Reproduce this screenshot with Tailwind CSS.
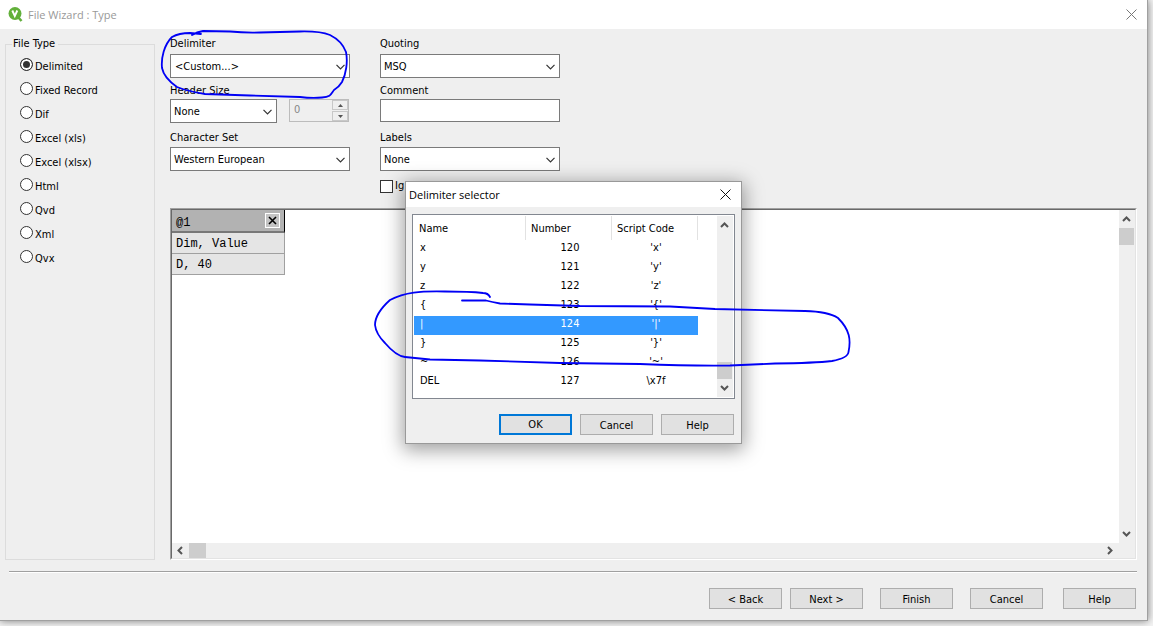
<!DOCTYPE html>
<html lang="en">
<head>
<meta charset="utf-8">
<title>File Wizard : Type</title>
<script src="https://cdn.jsdelivr.net/npm/@tailwindcss/browser@4"></script>
</head>
<body class="h-screen overflow-hidden bg-[#f4f4f4] pr-[5px] pb-[5px] font-['DejaVu_Sans_Condensed','DejaVu_Sans',sans-serif] text-[11px] leading-4 text-black">
<div class="relative flex h-full flex-col border-r border-b border-[#a0a0a0] bg-[#efefef] shadow-[0_0_8px_rgba(0,0,0,0.5)]">
  <header class="flex h-[29px] shrink-0 items-center bg-white pr-2.5 pl-[7px] text-[#999]">
    <svg class="mr-[5px] h-4 w-4" viewBox="0 0 16 16" aria-hidden="true"><path d="M11 10l3.500 4" stroke="#62ae3c" stroke-width="2.5"/><circle cx="8" cy="6.500" r="6.500" fill="#62b03a"/><path d="M5.300 3.500l2.500 5.500 2.500-5.500" fill="none" stroke="#fff" stroke-width="1.900"/></svg>
    <h1 class="grow font-['Open_Sans','Noto_Sans',sans-serif]">File Wizard : Type</h1>
    <button type="button" aria-label="Close window"><svg class="h-[11px] w-[11px]" viewBox="0 0 11 11"><path d="M.5.5l10 10M10.500.500l-10 10" stroke="#777" fill="none"/></svg></button>
  </header>

  <main class="flex min-h-0 grow gap-[15px] pt-[7px] pr-2.5 pl-[5px]">
    <fieldset class="flex w-[150px] shrink-0 flex-col border border-[#dcdcdc] pl-3.5">
      <legend class="-ml-2 pr-[3px] pl-px">File Type</legend>
      <div class="flex flex-col gap-1.5 pt-1.5 leading-[18px]">
        <label class="flex items-start gap-0.5"><input type="radio" name="ft" checked class="h-[13px] w-[13px] appearance-none rounded-full border border-[#333] bg-white checked:bg-[#333] checked:shadow-[inset_0_0_0_2px_#fff]">Delimited</label>
        <label class="flex items-start gap-0.5"><input type="radio" name="ft" class="h-[13px] w-[13px] appearance-none rounded-full border border-[#333] bg-white">Fixed Record</label>
        <label class="flex items-start gap-0.5"><input type="radio" name="ft" class="h-[13px] w-[13px] appearance-none rounded-full border border-[#333] bg-white">Dif</label>
        <label class="flex items-start gap-0.5"><input type="radio" name="ft" class="h-[13px] w-[13px] appearance-none rounded-full border border-[#333] bg-white">Excel (xls)</label>
        <label class="flex items-start gap-0.5"><input type="radio" name="ft" class="h-[13px] w-[13px] appearance-none rounded-full border border-[#333] bg-white">Excel (xlsx)</label>
        <label class="flex items-start gap-0.5"><input type="radio" name="ft" class="h-[13px] w-[13px] appearance-none rounded-full border border-[#333] bg-white">Html</label>
        <label class="flex items-start gap-0.5"><input type="radio" name="ft" class="h-[13px] w-[13px] appearance-none rounded-full border border-[#333] bg-white">Qvd</label>
        <label class="flex items-start gap-0.5"><input type="radio" name="ft" class="h-[13px] w-[13px] appearance-none rounded-full border border-[#333] bg-white">Xml</label>
        <label class="flex items-start gap-0.5"><input type="radio" name="ft" class="h-[13px] w-[13px] appearance-none rounded-full border border-[#333] bg-white">Qvx</label>
      </div>
    </fieldset>

    <div class="flex min-w-0 grow flex-col">
      <div class="flex gap-[30px] pb-[14px]">
        <div class="flex w-[180px] flex-col">
          <label for="delim">Delimiter</label>
          <div class="relative mt-0.5">
            <select id="delim" class="block h-6 w-full appearance-none border border-[#7a7a7a] bg-white pt-px pl-1"><option>&lt;Custom...&gt;</option></select>
            <svg class="pointer-events-none absolute top-[10px] right-[5px] h-[6px] w-[9px]" viewBox="0 0 9 6"><path d="M.5.8l4 4 4-4" fill="none" stroke="#333" stroke-width="1.200"/></svg>
          </div>
          <label for="hsize" class="mt-[5px]">Header Size</label>
          <div class="flex gap-3">
            <div class="relative w-[107px]">
              <select id="hsize" class="block h-6 w-full appearance-none border border-[#7a7a7a] bg-white pt-px pl-[3px]"><option>None</option></select>
              <svg class="pointer-events-none absolute top-[10px] right-[5px] h-[6px] w-[9px]" viewBox="0 0 9 6"><path d="M.5.8l4 4 4-4" fill="none" stroke="#333" stroke-width="1.200"/></svg>
            </div>
            <div class="flex h-[23px] w-[60px] border border-[#bcbcbc]">
              <input type="text" aria-label="Header lines" value="0" disabled class="w-0 grow pb-0.5 pl-1 text-[#888]">
              <div class="flex w-4 flex-col gap-px">
                <button type="button" disabled aria-label="Increase" class="flex grow items-center justify-center border border-[#c8c8c8]"><svg class="h-[3px] w-[5px]" viewBox="0 0 5 3"><path d="M0 3L2.500 0 5 3z" fill="#555"/></svg></button>
                <button type="button" disabled aria-label="Decrease" class="flex grow items-center justify-center border border-[#c8c8c8]"><svg class="h-[3px] w-[5px]" viewBox="0 0 5 3"><path d="M0 0L2.500 3 5 0z" fill="#555"/></svg></button>
              </div>
            </div>
          </div>
          <label for="charset" class="mt-[7px]">Character Set</label>
          <div class="relative mt-px">
            <select id="charset" class="block h-6 w-full appearance-none border border-[#7a7a7a] bg-white pt-px pl-[3px]"><option>Western European</option></select>
            <svg class="pointer-events-none absolute top-[10px] right-[5px] h-[6px] w-[9px]" viewBox="0 0 9 6"><path d="M.5.8l4 4 4-4" fill="none" stroke="#333" stroke-width="1.200"/></svg>
          </div>
        </div>
        <div class="flex w-[180px] flex-col">
          <label for="quoting">Quoting</label>
          <div class="relative mt-0.5">
            <select id="quoting" class="block h-6 w-full appearance-none border border-[#7a7a7a] bg-white pt-px pl-[3px]"><option>MSQ</option></select>
            <svg class="pointer-events-none absolute top-[10px] right-[5px] h-[6px] w-[9px]" viewBox="0 0 9 6"><path d="M.5.8l4 4 4-4" fill="none" stroke="#333" stroke-width="1.200"/></svg>
          </div>
          <label for="comment" class="mt-[5px]">Comment</label>
          <input id="comment" type="text" class="h-[23px] border border-[#7a7a7a] bg-white px-[3px]">
          <label for="labels" class="mt-2">Labels</label>
          <div class="relative mt-px">
            <select id="labels" class="block h-6 w-full appearance-none border border-[#7a7a7a] bg-white pt-px pl-[3px]"><option>None</option></select>
            <svg class="pointer-events-none absolute top-[10px] right-[5px] h-[6px] w-[9px]" viewBox="0 0 9 6"><path d="M.5.8l4 4 4-4" fill="none" stroke="#333" stroke-width="1.200"/></svg>
          </div>
          <label class="mt-[7px] flex items-center gap-0.5"><input type="checkbox" class="h-[13px] w-[13px] appearance-none border border-[#333] bg-white">Ig</label>
        </div>
      </div>

      <!-- Preview grid with its scrollbars -->
      <section class="min-h-0 grow border border-t-[#a0a0a0] border-r-white border-b-white border-l-[#a0a0a0]">
        <div class="flex h-full flex-col border border-t-[#696969] border-r-[#e3e3e3] border-b-[#e3e3e3] border-l-[#696969]">
          <div class="flex min-h-0 grow">
            <div class="grow bg-white">
              <table class="w-[113px] border-separate border-spacing-0 font-['Liberation_Mono',monospace] text-[12px]">
                <thead><tr><th class="h-[23px] border-r border-b-2 border-r-black border-b-[#787878] bg-[#b2b2b2] p-0 font-normal"><div class="flex items-center justify-between pr-1 pl-1"><span class="pt-1">@1</span><button type="button" aria-label="Remove column" class="flex h-[15px] w-[15px] items-center justify-center border border-white bg-[#c4c4c4]"><svg class="h-[9px] w-[9px]" viewBox="0 0 9 9"><path d="M1 1l7 7M8 1L1 8" stroke="#000" stroke-width="1.6"/></svg></button></div></th></tr></thead>
                <tbody>
                  <tr><td class="h-[21px] border-r border-b border-[#a0a0a0] bg-[#e5e5e5] p-0 pt-0.5 pl-1">Dim, Value</td></tr>
                  <tr><td class="h-[21px] border-r border-b border-[#a0a0a0] bg-[#e5e5e5] p-0 pt-0.5 pl-1">D, 40</td></tr>
                </tbody>
              </table>
            </div>
            <div class="flex w-4 flex-col items-center justify-between py-1.5 pr-px">
              <div class="flex w-full flex-col items-center gap-1.5"><svg class="h-[6px] w-[9px]" viewBox="0 0 9 6"><path d="M1 5l3.500-3.500L8 5" fill="none" stroke="#555" stroke-width="2"/></svg><div class="h-[17px] w-full bg-[#cdcdcd]"></div></div>
              <svg class="h-[6px] w-[9px]" viewBox="0 0 9 6"><path d="M1 1l3.500 3.500L8 1" fill="none" stroke="#555" stroke-width="2"/></svg>
            </div>
          </div>
          <div class="flex h-[15px] shrink-0 items-center justify-between pr-[22px] pl-[5px]">
            <div class="flex h-full items-center gap-1.5"><svg class="h-[9px] w-[6px]" viewBox="0 0 6 9"><path d="M5 1L1.500 4.500 5 8" fill="none" stroke="#555" stroke-width="2"/></svg><div class="h-full w-[17px] bg-[#cdcdcd]"></div></div>
            <svg class="h-[9px] w-[6px]" viewBox="0 0 6 9"><path d="M1 1l3.500 3.500L1 8" fill="none" stroke="#555" stroke-width="2"/></svg>
          </div>
        </div>
      </section>
    </div>
  </main>

  <footer class="mt-[11px] mr-2.5 ml-[9px] flex h-[49px] shrink-0 justify-end border-t border-[#a0a0a0] pt-4 pr-px shadow-[inset_0_1px_0_#fff]">
    <button type="button" class="h-[21px] w-[73px] border border-[#adadad] bg-[#e1e1e1] pt-0.5">&lt; Back</button>
    <button type="button" class="ml-2 h-[21px] w-[73px] border border-[#adadad] bg-[#e1e1e1] pt-0.5">Next &gt;</button>
    <button type="button" class="ml-[17px] h-[21px] w-[73px] border border-[#adadad] bg-[#e1e1e1] pt-0.5">Finish</button>
    <button type="button" class="ml-[17px] h-[21px] w-[73px] border border-[#adadad] bg-[#e1e1e1] pt-0.5">Cancel</button>
    <button type="button" class="ml-5 h-[21px] w-[73px] border border-[#adadad] bg-[#e1e1e1] pt-0.5">Help</button>
  </footer>
</div>

<div role="dialog" aria-labelledby="dlg-title" class="absolute top-[181px] left-[405px] w-[337px] border border-[#999] bg-[#efefef] shadow-[0_4px_18px_2px_rgba(0,0,0,0.38)]">
  <div class="flex h-[25px] items-center bg-white pr-2.5 pl-[3px]">
    <h2 id="dlg-title" class="grow font-['Open_Sans','Noto_Sans',sans-serif]">Delimiter selector</h2>
    <button type="button" aria-label="Close"><svg class="h-[11px] w-[11px]" viewBox="0 0 11 11"><path d="M.5.5l10 10M10.500.500l-10 10" stroke="#111" fill="none"/></svg></button>
  </div>
  <div class="mx-1.5 mt-[7px] flex h-[185px] justify-between border border-[#828790] bg-white p-px">
    <table class="w-[284px] table-fixed border-separate border-spacing-0 self-start text-center">
      <thead><tr class="h-6 text-left">
        <th class="w-[112px] border-r border-[#e2e2e2] p-0 pt-0.5 pl-[5px] font-normal">Name</th>
        <th class="w-[86px] border-r border-[#e2e2e2] p-0 pt-0.5 pl-[5px] font-normal">Number</th>
        <th class="w-[86px] border-r border-[#e2e2e2] p-0 pt-0.5 pl-[5px] font-normal">Script Code</th>
      </tr></thead>
      <tbody>
        <tr class="h-[19px] align-top"><td class="p-0 pl-1.5 text-left">x</td><td class="p-0 pl-0.5">120</td><td class="p-0 pl-0.5">'x'</td></tr>
        <tr class="h-[19px] align-top"><td class="p-0 pl-1.5 text-left">y</td><td class="p-0 pl-0.5">121</td><td class="p-0 pl-0.5">'y'</td></tr>
        <tr class="h-[19px] align-top"><td class="p-0 pl-1.5 text-left">z</td><td class="p-0 pl-0.5">122</td><td class="p-0 pl-0.5">'z'</td></tr>
        <tr class="h-[19px] align-top"><td class="p-0 pl-1.5 text-left">{</td><td class="p-0 pl-0.5">123</td><td class="p-0 pl-0.5">'{'</td></tr>
        <tr class="h-[19px] bg-[#3399ff] align-top text-white"><td class="p-0 pl-1.5 text-left">|</td><td class="p-0 pl-0.5">124</td><td class="p-0 pl-0.5">'|'</td></tr>
        <tr class="h-[19px] align-top"><td class="p-0 pl-1.5 text-left">}</td><td class="p-0 pl-0.5">125</td><td class="p-0 pl-0.5">'}'</td></tr>
        <tr class="h-[19px] align-top"><td class="p-0 pl-1.5 text-left">~</td><td class="p-0 pl-0.5">126</td><td class="p-0 pl-0.5">'~'</td></tr>
        <tr class="h-[19px] align-top"><td class="p-0 pl-1.5 text-left">DEL</td><td class="p-0 pl-0.5">127</td><td class="p-0 pl-0.5">\x7f</td></tr>
      </tbody>
    </table>
    <div class="flex w-4 flex-col items-center justify-between bg-[#efefef] py-1.5 pr-px">
      <svg class="h-[6px] w-[9px]" viewBox="0 0 9 6"><path d="M1 5l3.500-3.500L8 5" fill="none" stroke="#555" stroke-width="2"/></svg>
      <div class="flex w-full flex-col items-center gap-1.5"><div class="h-[17px] w-full bg-[#cdcdcd]"></div><svg class="h-[6px] w-[9px]" viewBox="0 0 9 6"><path d="M1 1l3.500 3.500L8 1" fill="none" stroke="#555" stroke-width="2"/></svg></div>
    </div>
  </div>
  <div class="flex justify-end gap-2 pt-[15px] pr-[7px] pb-2">
    <button type="button" class="h-[21px] w-[73px] border-2 border-[#0078d7] bg-[#e1e1e1] pt-px">OK</button>
    <button type="button" class="h-[21px] w-[73px] border border-[#adadad] bg-[#e1e1e1] pt-0.5">Cancel</button>
    <button type="button" class="h-[21px] w-[73px] border border-[#adadad] bg-[#e1e1e1] pt-0.5">Help</button>
  </div>
</div>

<!-- Hand-drawn pen marks -->
<svg class="pointer-events-none absolute top-0 left-0 h-[626px] w-[1153px]" viewBox="0 0 1153 626" fill="none" stroke="#0000f5" stroke-width="1.800" stroke-linecap="round" stroke-linejoin="round" aria-hidden="true">
  <path d="M192 35Q197 32 203 31L230 31.500Q245 33 260 32.500L300 31.500Q320 31 330 35Q342 41 346 52C348 62 346 74 342 82Q339 87 334 90C331 94 331 97 322 97.500Q312 98.500 300 97L250 95.500 205 94Q187 91 177 87Q164 78 162 68C161 58 164 45 172 37Q179 33 190 33L201 34"/>
  <path d="M490 297Q488 293 483 293Q470 291.500 445 291.500C420 291 405 292 390 300C380 309 375 318 375 325Q376 334 385 343Q396 356 405 357L430 359.500 480 360.500 560 363 640 364 Q690 366 730 365.500L775 363.500Q815 363 832 361Q848 358 848.500 352C851 340 850 330 838 318Q828 311.500 805 311L715 309 670 306.500 580 306 530 304.500 500 303.500Q492 302 486 300.500L462 300.500"/>
</svg>
</body>
</html>
